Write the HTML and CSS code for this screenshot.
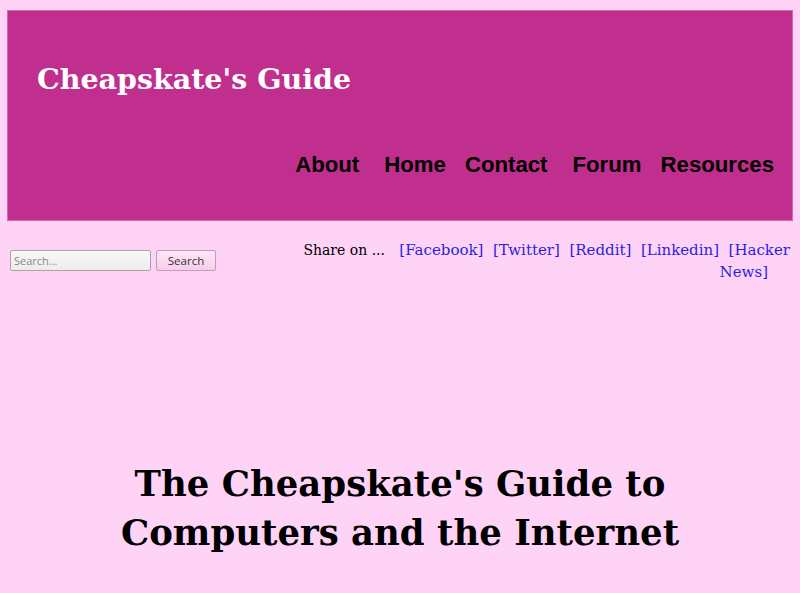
FILE: index.html
```html
<!DOCTYPE html>
<html>
<head>
<meta charset="utf-8">
<title>Cheapskate's Guide</title>
<link rel="stylesheet" href="styles.css">
</head>
<body>
<header class="site-header">
  <div class="site-title">Cheapskate's Guide</div>
  <nav class="main-nav">
    <a class="nav-link wide" href="#">About</a>
    <a class="nav-link" href="#">Home</a>
    <a class="nav-link wide" href="#">Contact</a>
    <a class="nav-link" href="#">Forum</a>
    <a class="nav-link" href="#">Resources</a>
  </nav>
</header>
<div class="toolbar">
  <form class="search-form">
    <input class="search-input" type="text" placeholder="Search...">
    <button class="search-btn" type="button">Search</button>
  </form>
  <div class="share"><span class="share-label">Share on ...</span>&nbsp;&nbsp; <a href="#">[Facebook]</a>&nbsp; <a href="#">[Twitter]</a>&nbsp; <a href="#">[Reddit]</a>&nbsp; <a href="#">[Linkedin]</a>&nbsp; <a href="#">[Hacker News]</a><span class="trail"></span></div>
</div>
<main class="content">
  <h1 class="page-title">The Cheapskate's Guide to<br>Computers and the Internet</h1>
</main>
</body>
</html>
```
FILE: styles.css
```css
html, body {
  margin: 0;
  padding: 0;
  background: #ffd3f6;
}
body {
  font-family: "DejaVu Serif", serif;
  color: #000;
}
.site-header {
  margin: 10px 7px 0 7px;
  height: 209px;
  background: #c02e8e;
  border: 1px solid #d866b4;
  display: flex;
  flex-direction: column;
  box-sizing: content-box;
}
.site-title {
  font-family: "DejaVu Serif", serif;
  font-weight: bold;
  font-size: 28.5px;
  color: #fff;
  line-height: 33px;
  margin: 52px 0 0 29px;
}
.main-nav {
  display: flex;
  justify-content: flex-end;
  gap: 19px;
  margin-top: 56px;
  padding-right: 18px;
}
.nav-link {
  font-family: "Liberation Sans", Arial, sans-serif;
  font-weight: bold;
  font-size: 22.2px;
  line-height: 25px;
  color: #000;
  text-decoration: none;
}
.nav-link.wide {
  margin-right: 6px;
}
.toolbar {
  display: flex;
  justify-content: space-between;
  align-items: flex-start;
  padding: 18px 10px 0 10px;
}
.search-form {
  display: flex;
  gap: 5px;
  margin-top: 11px;
}
.search-input {
  width: 141px;
  height: 21px;
  box-sizing: border-box;
  border: 1px solid #a9a3a8;
  border-radius: 2px;
  background: linear-gradient(#f8f8f8, #ececec);
  font-family: "Open Sans", sans-serif;
  font-size: 11px;
  padding: 0 3px;
  margin: 0;
}
.search-input::placeholder {
  color: #888;
}
.search-btn {
  width: 60px;
  height: 21px;
  box-sizing: border-box;
  border: 1px solid #c49ab8;
  border-radius: 2px;
  background: linear-gradient(#ffe6f8, #f7cdea);
  font-family: "Open Sans", sans-serif;
  font-size: 11.5px;
  color: #333;
  padding: 0;
  margin: 0;
}
.share {
  width: 500px;
  text-align: right;
  font-size: 15px;
  line-height: 22px;
}
.share-label {
  font-size: 14px;
}
.share a {
  color: #2a1fe0;
  text-decoration: none;
}
.trail {
  display: inline-block;
  width: 22px;
}
.content {
  padding-top: 176px;
  text-align: center;
}
.page-title {
  margin: 0;
  font-family: "DejaVu Serif", serif;
  font-weight: bold;
  font-size: 35.5px;
  line-height: 49px;
}
```
